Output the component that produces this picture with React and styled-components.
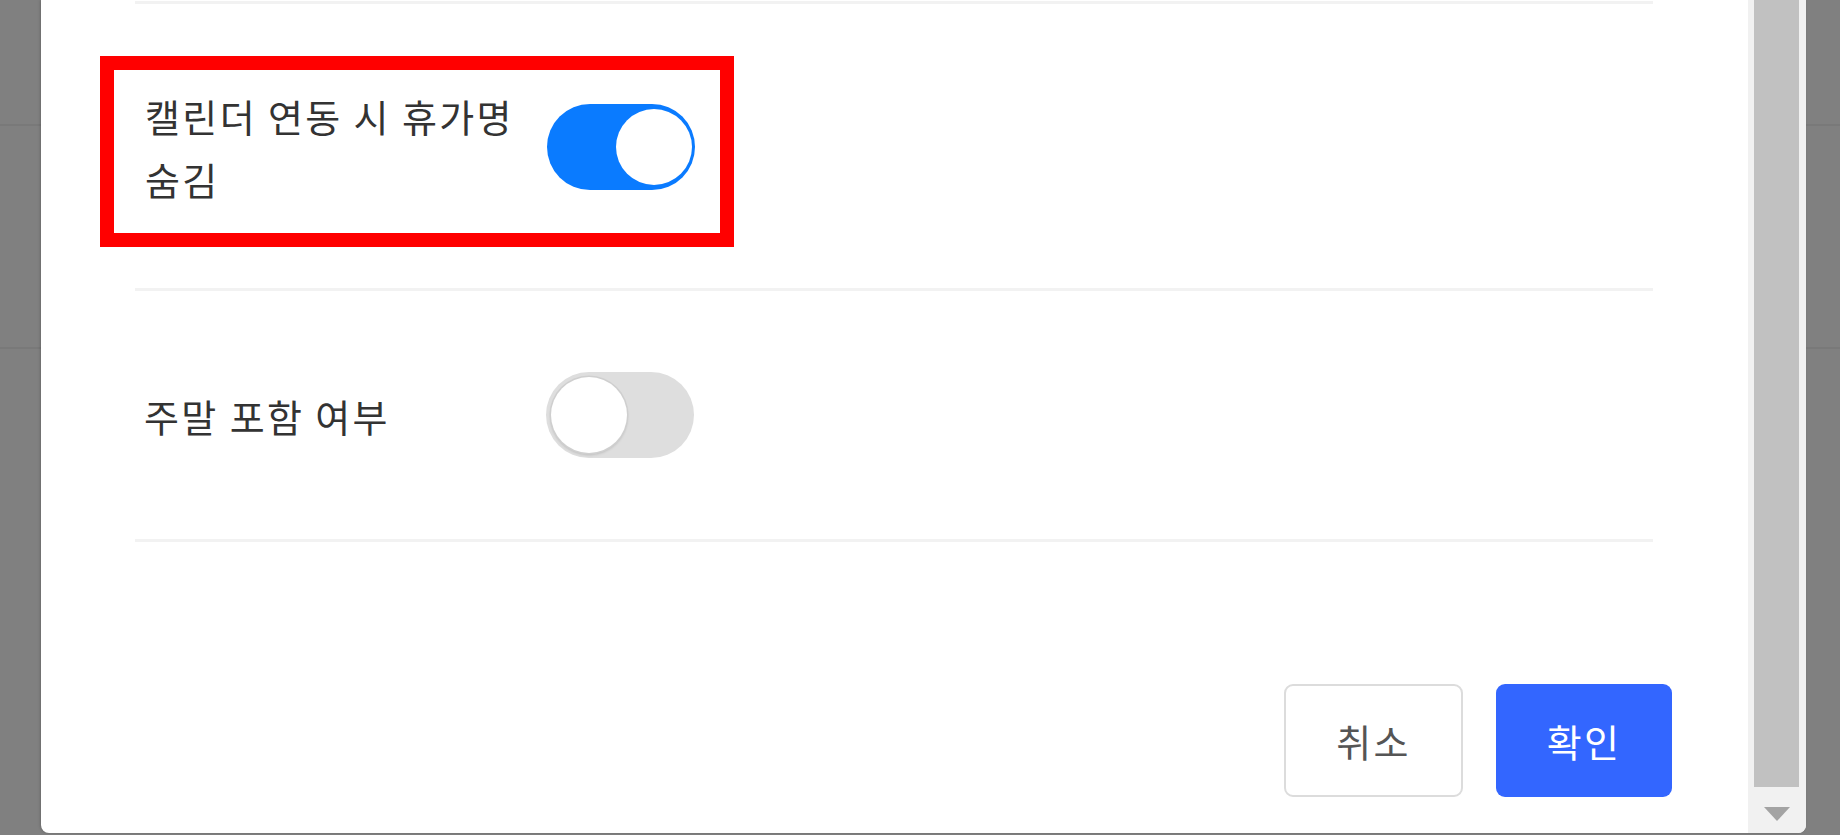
import React, { useState } from "react";
import styled, { createGlobalStyle } from "styled-components";

const GlobalStyle = createGlobalStyle`
  html, body { margin: 0; padding: 0; }
  body {
    background: #808080;
    overflow: hidden;
    font-family: "Noto Sans CJK KR", "Noto Sans", sans-serif;
  }
  * { box-sizing: border-box; }
`;

const Page = styled.div`
  position: relative;
  width: 1840px;
  height: 835px;
  overflow: hidden;
  background: #808080;
`;

const Backdrop = styled.div`
  display: flex;
  flex-direction: column;
  padding-top: 124px;
`;

const BackdropLine = styled.div`
  height: 2px;
  background: #797979;
  margin-bottom: ${(p) => p.$after || 0}px;
`;

const Modal = styled.div`
  position: absolute;
  left: 41px;
  top: 0;
  width: 1765px;
  height: 833px;
  background: #fff;
  border-radius: 0 0 8px 8px;
  box-shadow: -1px 0 3px rgba(0, 0, 0, 0.18);
  display: flex;
  overflow: hidden;
`;

const Body = styled.div`
  flex: 1;
  display: flex;
  flex-direction: column;
  padding: 1px 95px 0 94px;
`;

const Divider = styled.div`
  height: 3px;
  background: #f2f2f2;
  flex-shrink: 0;
`;

const Row = styled.div`
  display: flex;
  align-items: center;
  height: ${(p) => p.$height}px;
  padding: ${(p) => p.$padding || "0"};
`;

const Highlight = styled.div`
  display: flex;
  align-items: center;
  margin-left: -35px;
  border: 14px solid #ff0000;
  padding: 14px 25px 23px 31px;
`;

const Label = styled.div`
  width: 380px;
  margin-right: 22px;
  font-size: 38px;
  line-height: 63px;
  color: #333;
  word-break: keep-all;
  letter-spacing: 2.4px;
`;

const ToggleTrack = styled.button`
  position: relative;
  width: 148px;
  height: 86px;
  border: none;
  padding: 0;
  border-radius: 43px;
  background: ${(p) => (p.$on ? "#0a7bff" : "#dedede")};
  cursor: pointer;
  flex-shrink: 0;
`;

const ToggleKnob = styled.span`
  position: absolute;
  top: 5px;
  left: 5px;
  width: 76px;
  height: 76px;
  border-radius: 50%;
  background: #fff;
  transform: translateX(${(p) => (p.$on ? 64 : 0)}px);
  box-shadow: ${(p) =>
    p.$on ? "none" : "0 0 0 1.5px #cfcfcf, 0 2px 3px rgba(0,0,0,0.18)"};
`;

const Footer = styled.div`
  display: flex;
  justify-content: flex-end;
  gap: 33px;
  margin-top: 142px;
  margin-right: -19px;
`;

const Button = styled.button`
  width: ${(p) => (p.$primary ? 176 : 179)}px;
  height: 113px;
  border-radius: 9px;
  font-family: "Noto Sans CJK KR", "Noto Sans", sans-serif;
  font-size: 38px;
  letter-spacing: 2.4px;
  cursor: pointer;
  background: ${(p) => (p.$primary ? "#3366ff" : "#fff")};
  color: ${(p) => (p.$primary ? "#fff" : "#555")};
  border: ${(p) => (p.$primary ? "none" : "2px solid #dcdcdc")};
`;

const Scrollbar = styled.div`
  width: 58px;
  flex-shrink: 0;
  background: #f1f1f1;
  display: flex;
  flex-direction: column;
  padding: 0 7px 0 6px;
`;

const Thumb = styled.div`
  height: 787px;
  background: #c1c1c1;
`;

const ArrowButton = styled.div`
  flex: 1;
  display: flex;
  justify-content: center;
  padding-top: 20px;
`;

const Toggle = ({ initial }) => {
  const [on, setOn] = useState(initial);
  return (
    <ToggleTrack $on={on} onClick={() => setOn(!on)} aria-pressed={on}>
      <ToggleKnob $on={on} />
    </ToggleTrack>
  );
};

export default function App() {
  return (
    <>
      <GlobalStyle />
      <Page>
        <Backdrop>
          <BackdropLine $after={221} />
          <BackdropLine />
        </Backdrop>
        <Modal>
          <Body>
            <Divider />
            <Row $height={284} $padding="52px 0 41px">
              <Highlight>
                <Label>캘린더 연동 시 휴가명 숨김</Label>
                <Toggle initial={true} />
              </Highlight>
            </Row>
            <Divider />
            <Row $height={248} $padding="0 0 0 9px">
              <Label>주말 포함 여부</Label>
              <Toggle initial={false} />
            </Row>
            <Divider />
            <Footer>
              <Button>취소</Button>
              <Button $primary>확인</Button>
            </Footer>
          </Body>
          <Scrollbar>
            <Thumb />
            <ArrowButton>
              <svg width="26" height="14" viewBox="0 0 26 14">
                <polygon points="0,0 26,0 13,14" fill="#a3a3a3" />
              </svg>
            </ArrowButton>
          </Scrollbar>
        </Modal>
      </Page>
    </>
  );
}
